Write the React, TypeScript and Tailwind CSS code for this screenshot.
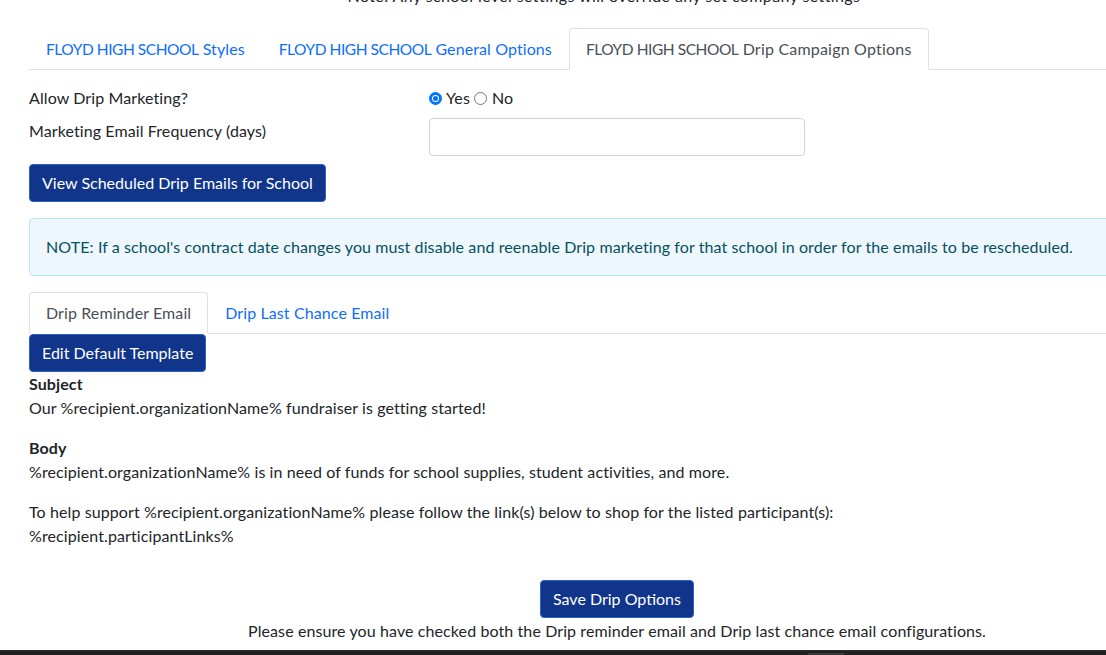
import React from "react";

const btn =
  "inline-flex items-center h-[38px] px-3 rounded-[4px] border border-[#2a62c9] bg-[#11358b] text-white text-[16px] leading-6 tracking-normal";

function Caps() {
  return <span className="text-[15.5px] tracking-[-0.45px]">FLOYD HIGH SCHOOL</span>;
}

function Radio({ checked }: { checked?: boolean }) {
  return checked ? (
    <span className="inline-block w-[13px] h-[13px] rounded-full bg-[#0075ff] border border-[#0075ff] relative">
      <span className="absolute inset-[2px] rounded-full bg-white" />
      <span className="absolute inset-[3px] rounded-full bg-[#0075ff]" />
    </span>
  ) : (
    <span className="inline-block w-[13px] h-[13px] rounded-full border border-[#767676] bg-white" />
  );
}

export default function App() {
  return (
    <div
      className="w-[1106px] h-[655px] overflow-hidden bg-white relative text-[16px] leading-6 tracking-[0.1px] text-[#212529] flex flex-col"
      style={{ fontFamily: "Lato, 'Open Sans', sans-serif" }}
    >
      <div className="ml-[29px] w-[1150px] text-center -mt-[16px] tracking-[0.4px] shrink-0">
        Note: Any school level settings will override any set company settings
      </div>

      <div className="ml-[29px] w-[1200px] mt-[20px] flex border-b border-[#dee2e6] shrink-0">
        <div className="px-4 py-2 border border-transparent -mb-px text-[#0d6efd]">
          <Caps /> Styles
        </div>
        <div className="px-4 py-2 border border-transparent -mb-px text-[#0d6efd]">
          <Caps /> General Options
        </div>
        <div className="px-4 py-2 border border-[#dee2e6] border-b-white rounded-t-[4px] bg-white -mb-px text-[#495057] tracking-[0.2px]">
          <Caps /> Drip Campaign Options
        </div>
      </div>

      <div className="ml-[29px] mt-[16px] flex flex-col shrink-0">
        <div className="flex items-center h-[24px]">
          <div className="w-[400px]">Allow Drip Marketing?</div>
          <div className="flex items-center">
            <Radio checked />
            <span className="ml-[4px]">Yes</span>
            <span className="ml-[4px] flex items-center">
              <Radio />
            </span>
            <span className="ml-[5px]">No</span>
          </div>
        </div>
        <div className="flex items-start mt-[8px]">
          <div className="w-[400px] pt-px">Marketing Email Frequency (days)</div>
          <div className="w-[376px] h-[38px] rounded-[4px] border border-[#ced4da] bg-white" />
        </div>
        <div className="mt-[8px]">
          <button className={btn}>View Scheduled Drip Emails for School</button>
        </div>
      </div>

      <div className="ml-[29px] mt-[16px] w-[1200px] h-[58px] border border-[#b6e9f5] bg-[#eef7fd] rounded-[4px] px-4 flex items-center text-[#055160] shrink-0">
        NOTE: If a school's contract date changes you must disable and reenable Drip marketing for that school in order for the emails to be rescheduled.
      </div>

      <div className="ml-[29px] mt-[16px] w-[1200px] flex border-b border-[#dee2e6] shrink-0">
        <div className="px-4 py-2 border border-[#dee2e6] border-b-white rounded-t-[4px] bg-white -mb-px text-[#495057]">
          Drip Reminder Email
        </div>
        <div className="px-4 py-2 border border-transparent -mb-px text-[#0d6efd]">
          Drip Last Chance Email
        </div>
      </div>

      <div className="ml-[29px] flex flex-col shrink-0">
        <div>
          <button className={btn}>Edit Default Template</button>
        </div>
        <div className="font-bold">Subject</div>
        <p className="mb-4">Our %recipient.organizationName% fundraiser is getting started!</p>
        <div className="font-bold">Body</div>
        <p className="mb-4">
          %recipient.organizationName% is in need of funds for school supplies, student activities, and more.
        </p>
        <p>
          To help support %recipient.organizationName% please follow the link(s) below to shop for the listed participant(s):
          <br />
          %recipient.participantLinks%
        </p>
      </div>

      <div className="ml-[29px] w-[1176px] mt-[32px] flex flex-col items-center shrink-0">
        <button className={btn}>Save Drip Options</button>
        <div className="mt-px">
          Please ensure you have checked both the Drip reminder email and Drip last chance email configurations.
        </div>
      </div>

      <div className="absolute left-0 right-0 bottom-0 h-[5px] bg-[#202020] border-t border-[#2c2c2c]">
        <div className="absolute left-[808px] w-[36px] bottom-0 h-[2px] bg-[#3a3a3a]" />
      </div>
    </div>
  );
}
